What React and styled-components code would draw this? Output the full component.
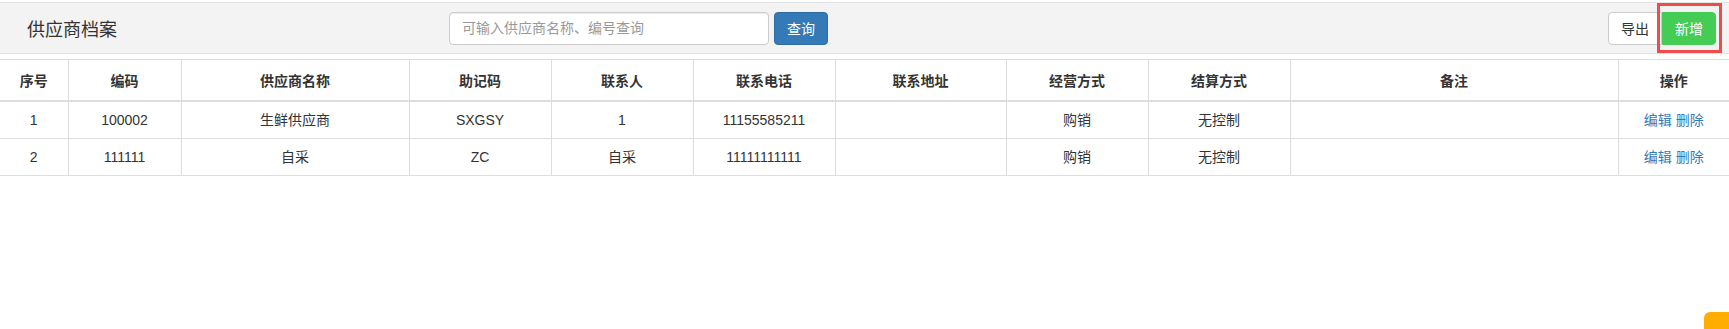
import React from "react";
import styled, { createGlobalStyle } from "styled-components";

const columns = [
    { key: "idx", title: "序号", width: 68 },
    { key: "code", title: "编码", width: 113 },
    { key: "name", title: "供应商名称", width: 228 },
    { key: "mnemonic", title: "助记码", width: 142 },
    { key: "contact", title: "联系人", width: 142 },
    { key: "phone", title: "联系电话", width: 142 },
    { key: "address", title: "联系地址", width: 171 },
    { key: "mode", title: "经营方式", width: 142 },
    { key: "settle", title: "结算方式", width: 142 },
    { key: "remark", title: "备注", width: 328 },
    { key: "ops", title: "操作", width: 111 },
];

const rows = [
    { idx: "1", code: "100002", name: "生鲜供应商", mnemonic: "SXGSY", contact: "1", phone: "11155585211", address: "", mode: "购销", settle: "无控制", remark: "" },
    { idx: "2", code: "111111", name: "自采", mnemonic: "ZC", contact: "自采", phone: "11111111111", address: "", mode: "购销", settle: "无控制", remark: "" },
];

const App = () => {
    return (
        <Page>
            <GlobalStyle />
            <TopBar>
                <Title>供应商档案</Title>
                <SearchGroup>
                    <SearchInput placeholder="可输入供应商名称、编号查询" />
                    <Button $variant="primary">查询</Button>
                </SearchGroup>
                <BtnGroup>
                    <Button $variant="default" $group="left">导出</Button>
                    <Marked>
                        <Button $variant="success" $group="right">新增</Button>
                        <MarkBox />
                    </Marked>
                </BtnGroup>
            </TopBar>
            <Table>
                <colgroup>
                    {columns.map(c => <col key={c.key} style={{ width: c.width }} />)}
                </colgroup>
                <thead>
                    <tr>
                        {columns.map(c => <Th key={c.key}>{c.title}</Th>)}
                    </tr>
                </thead>
                <tbody>
                    {rows.map(r => (
                        <tr key={r.idx}>
                            {columns.map(c => c.key === "ops" ? (
                                <Td key={c.key}>
                                    <LinkText href="#">编辑</LinkText> <LinkText href="#">删除</LinkText>
                                </Td>
                            ) : (
                                <Td key={c.key}>{r[c.key]}</Td>
                            ))}
                        </tr>
                    ))}
                </tbody>
            </Table>
            <FloatTab />
        </Page>
    );
};

const GlobalStyle = createGlobalStyle`
    html, body {
        margin: 0;
        padding: 0;
        background: #fff;
    }
    body {
        font-family: "Liberation Sans", "Noto Sans CJK SC", sans-serif;
        font-size: 14px;
        line-height: 20px;
        color: #333;
    }
    * { box-sizing: border-box; }
`;

const Page = styled.div`
    width: 100%;
    padding-top: 2px;
`;

const TopBar = styled.div`
    display: flex;
    align-items: center;
    height: 52px;
    padding: 0 13px 0 27px;
    background: #f3f3f3;
    border-top: 1px solid #e3e3e3;
    border-bottom: 1px solid #e3e3e3;
`;

const Title = styled.div`
    flex: 0 0 422px;
    font-size: 18px;
    color: #333;
    font-family: "Noto Sans CJK SC", sans-serif;
`;

const SearchGroup = styled.div`
    display: flex;
    align-items: center;
    gap: 5px;
`;

const SearchInput = styled.input`
    width: 320px;
    height: 33px;
    padding: 6px 12px;
    font-size: 14px;
    font-family: "Liberation Sans", "Noto Sans CJK SC", sans-serif;
    color: #555;
    background: #fff;
    border: 1px solid #ccc;
    border-radius: 4px;
    box-shadow: inset 0 1px 1px rgba(0,0,0,.075);
    outline: none;
    &::placeholder { color: #999; }
`;

const variants = {
    primary: { bg: "#337ab7", border: "#2e6da4", color: "#fff" },
    default: { bg: "#fff", border: "#ccc", color: "#333" },
    success: { bg: "#44cc55", border: "#44cc55", color: "#fff" },
};

const Button = styled.button`
    height: 33px;
    padding: 0 12px;
    font-size: 14px;
    font-family: "Noto Sans CJK SC", sans-serif;
    line-height: 20px;
    cursor: pointer;
    background: ${p => variants[p.$variant].bg};
    border: 1px solid ${p => variants[p.$variant].border};
    color: ${p => variants[p.$variant].color};
    border-radius: ${p => p.$group === "left" ? "4px 0 0 4px" : p.$group === "right" ? "0 4px 4px 0" : "4px"};
    min-width: 53px;
    display: block;
`;

const BtnGroup = styled.div`
    margin-left: auto;
    display: flex;
    align-items: center;
`;

const Marked = styled.div`
    position: relative;
    display: flex;
`;

const MarkBox = styled.span`
    position: absolute;
    top: -9px;
    bottom: -8px;
    left: -5px;
    right: -6px;
    border: 3px solid #f24b4b;
    pointer-events: none;
`;

const Table = styled.table`
    width: 100%;
    margin-top: 5px;
    border-collapse: collapse;
    table-layout: fixed;
    border-top: 1px solid #ddd;
`;

const Th = styled.th`
    padding: 10px 8px;
    height: 40px;
    font-weight: 700;
    text-align: center;
    color: #333;
    border: 1px solid #ddd;
    border-bottom-width: 2px;
    border-top: 0;
    font-family: "Noto Sans CJK SC", sans-serif;
    &:first-child { border-left: 0; }
    &:last-child { border-right: 0; }
`;

const Td = styled.td`
    padding: 8px;
    height: 37px;
    text-align: center;
    border: 1px solid #ddd;
    white-space: nowrap;
    &:first-child { border-left: 0; }
    &:last-child { border-right: 0; }
`;

const LinkText = styled.a`
    color: #337ab7;
    text-decoration: none;
`;

const FloatTab = styled.div`
    position: fixed;
    right: 0;
    bottom: 0;
    width: 25px;
    height: 17px;
    background: #ffae00;
    border-top-left-radius: 6px;
`;

export default App;
